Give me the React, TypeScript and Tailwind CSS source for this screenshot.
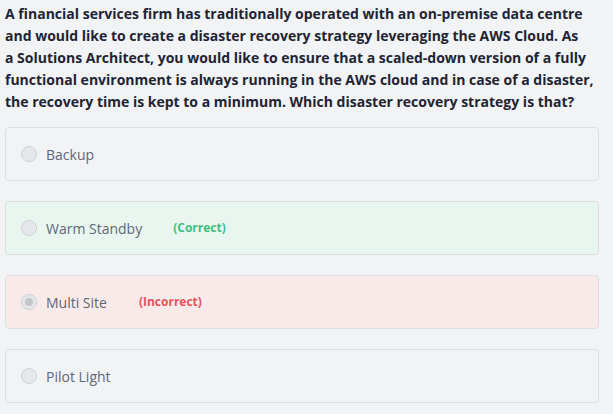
import React from "react";

type Opt = { text: string; state?: "correct" | "incorrect"; checked?: boolean };

const opts: Opt[] = [
  { text: "Backup" },
  { text: "Warm Standby", state: "correct" },
  { text: "Multi Site", state: "incorrect", checked: true },
  { text: "Pilot Light" },
];

const lines = [
  "A financial services firm has traditionally operated with an on-premise data centre",
  "and would like to create a disaster recovery strategy leveraging the AWS Cloud. As",
  "a Solutions Architect, you would like to ensure that a scaled-down version of a fully",
  "functional environment is always running in the AWS cloud and in case of a disaster,",
  "the recovery time is kept to a minimum. Which disaster recovery strategy is that?",
];

export default function App() {
  return (
    <div
      className="w-[613px] h-[414px] bg-[#f2f3f5] px-[5px] pt-[3px] overflow-hidden"
      style={{ fontFamily: '"Open Sans", "Noto Sans", sans-serif' }}
    >
      <p className="text-[14px] leading-[22px] font-bold text-[#1e2433] w-[603px]">
        {lines.map((l, i) => (
          <span key={i} className="block whitespace-nowrap">
            {l}
          </span>
        ))}
      </p>
      <div className="mt-[14px] flex flex-col gap-[20px] w-[594px]">
        {opts.map((o) => (
          <div
            key={o.text}
            className={
              "h-[54px] rounded-[4px] border border-[#dcdee1] flex items-center pl-[15px] " +
              (o.state === "correct"
                ? "bg-[#e8f6ef]"
                : o.state === "incorrect"
                ? "bg-[#f9eaea]"
                : "bg-[#f2f3f5]")
            }
          >
            <span className="w-[16px] h-[16px] rounded-full border border-[#cdd0d4] bg-[#e6e7ea] flex items-center justify-center">
              {o.checked && <span className="w-[8px] h-[8px] rounded-full bg-[#c3c5c9]" />}
            </span>
            <span className="ml-[9px] text-[14px] text-[#5f6779]">{o.text}</span>
            {o.state === "correct" && (
              <span className="ml-[31px] text-[12px] font-bold text-[#3fbf82]">(Correct)</span>
            )}
            {o.state === "incorrect" && (
              <span className="ml-[32px] text-[12px] font-bold text-[#e8535a]">(Incorrect)</span>
            )}
          </div>
        ))}
      </div>
    </div>
  );
}
